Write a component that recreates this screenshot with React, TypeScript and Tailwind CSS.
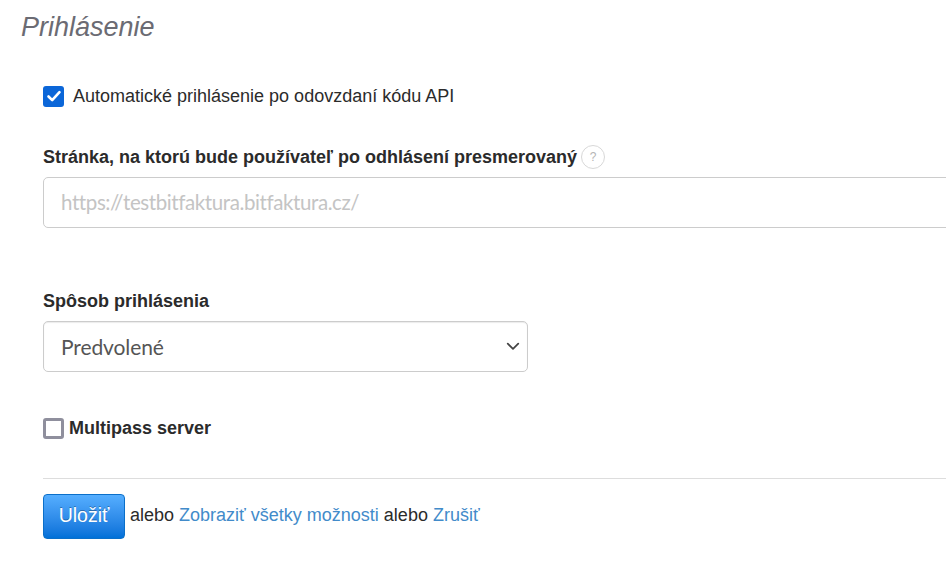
import React from 'react'

export default function App() {
  return (
    <div className="h-[564px] w-[946px] overflow-hidden bg-white font-['Liberation_Sans',Arial,sans-serif] text-[18px] text-[#2b2b2b]">
      <h1 className="pl-[21px] pt-[12px] text-[27px] leading-[30px] italic text-[#6b6b73]">Prihlásenie</h1>

      <div className="pl-[43px]">
        <label className="mt-[43px] flex h-[22px] items-center gap-[9px]">
          <span className="flex h-[21px] w-[21px] items-center justify-center rounded-[3px] bg-[#0b66d8]">
            <svg viewBox="0 0 16 16" className="h-[16px] w-[16px]" fill="none" stroke="white" strokeWidth="2.6" strokeLinecap="round" strokeLinejoin="round">
              <path d="M2.5 8.5l3.7 3.7 7.3-8" />
            </svg>
          </span>
          Automatické prihlásenie po odovzdaní kódu API
        </label>

        <div className="mt-[38px] flex h-[24px] items-center gap-[4px] font-bold">
          Stránka, na ktorú bude používateľ po odhlásení presmerovaný
          <span className="flex h-[24px] w-[24px] items-center justify-center rounded-full border border-[#d8d8d8] text-[12px] font-normal text-[#b5b5b5]">?</span>
        </div>
        <input
          readOnly
          placeholder="https://testbitfaktura.bitfaktura.cz/"
          className="mt-[8px] block h-[51px] w-[960px] rounded-[5px] border border-[#cccccc] px-[17px] pb-[2px] font-['Lato',sans-serif] text-[20.5px] tracking-[-0.4px] placeholder:text-[#c4c4c4]"
        />

        <div className="mt-[61px] h-[24px] leading-[24px] font-bold">Spôsob prihlásenia</div>
        <div className="relative mt-[8px] h-[51px] w-[485px]">
          <select className="block h-full w-full appearance-none rounded-[5px] border border-[#cccccc] bg-white px-[17px] font-['Lato',sans-serif] text-[21px] tracking-[-0.1px] text-[#555555] shadow-[inset_0_1px_1px_rgba(0,0,0,0.08)]">
            <option>Predvolené</option>
          </select>
          <svg viewBox="0 0 12 12" className="absolute right-[8px] top-[18px] h-[14px] w-[14px]" fill="none" stroke="#444444" strokeWidth="1.5" strokeLinecap="round" strokeLinejoin="round">
            <path d="M1.5 4l4.5 4.5L10.5 4" />
          </svg>
        </div>

        <label className="mt-[45px] flex h-[22px] items-center gap-[5px] font-bold">
          <span className="h-[21px] w-[21px] rounded-[3px] border-[3px] border-[#8f8f9d] bg-white" />
          Multipass server
        </label>

        <div className="mt-[39px] border-t border-[#dddddd]" />

        <div className="mt-[15px] flex items-center gap-[5px]">
          <button className="h-[45px] w-[82px] rounded-[4px] border border-[#0b6fc9] bg-gradient-to-b from-[#55aeff] to-[#0070d8] pb-[1px] text-[19.5px] text-white [text-shadow:0_-1px_0_rgba(0,0,0,0.3)]">Uložiť</button>
          <span className="-mt-[3px]">
            alebo <a className="text-[#428bca]">Zobraziť všetky možnosti</a> alebo <a className="text-[#428bca]">Zrušiť</a>
          </span>
        </div>
      </div>
    </div>
  )
}
